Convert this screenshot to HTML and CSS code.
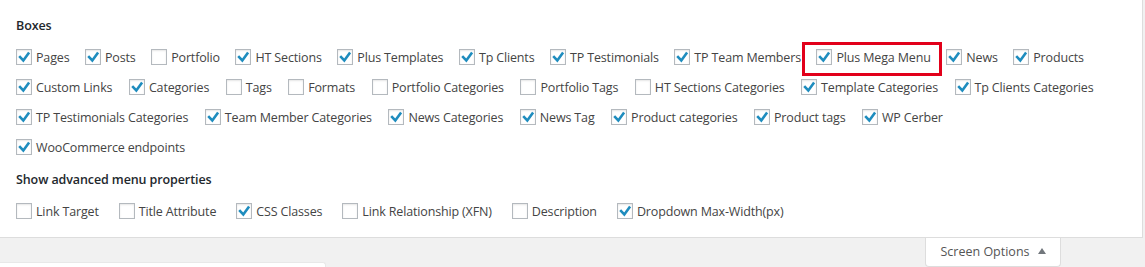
FILE: index.html
```html
<!DOCTYPE html>
<html lang="en">
<head>
<meta charset="utf-8">
<title>Screen Options</title>
<link rel="stylesheet" href="styles.css">
</head>
<body>
<svg class="defs" width="0" height="0" aria-hidden="true">
  <symbol id="tick" viewBox="0 0 16 16">
    <path d="M3.2 7.1 L7.3 11.4 L13.1 3.4" fill="none" stroke="#1e8cbe" stroke-width="2.6" stroke-linecap="butt" stroke-linejoin="miter"/>
  </symbol>
</svg>

<div class="panel">
  <div class="group-title">Boxes</div>
  <div class="row">
    <label class="opt"><span class="cb"><svg><use href="#tick"/></svg></span>Pages</label>
    <label class="opt"><span class="cb"><svg><use href="#tick"/></svg></span>Posts</label>
    <label class="opt"><span class="cb"></span>Portfolio</label>
    <label class="opt"><span class="cb"><svg><use href="#tick"/></svg></span>HT Sections</label>
    <label class="opt"><span class="cb"><svg><use href="#tick"/></svg></span>Plus Templates</label>
    <label class="opt"><span class="cb"><svg><use href="#tick"/></svg></span>Tp Clients</label>
    <label class="opt"><span class="cb"><svg><use href="#tick"/></svg></span>TP Testimonials</label>
    <label class="opt"><span class="cb"><svg><use href="#tick"/></svg></span>TP Team Members</label>
    <label class="opt highlight"><span class="cb"><svg><use href="#tick"/></svg></span>Plus Mega Menu</label>
    <label class="opt"><span class="cb"><svg><use href="#tick"/></svg></span>News</label>
    <label class="opt"><span class="cb"><svg><use href="#tick"/></svg></span>Products</label>
  </div>
  <div class="row wide">
    <label class="opt"><span class="cb"><svg><use href="#tick"/></svg></span>Custom Links</label>
    <label class="opt"><span class="cb"><svg><use href="#tick"/></svg></span>Categories</label>
    <label class="opt"><span class="cb"></span>Tags</label>
    <label class="opt"><span class="cb"></span>Formats</label>
    <label class="opt"><span class="cb"></span>Portfolio Categories</label>
    <label class="opt"><span class="cb"></span>Portfolio Tags</label>
    <label class="opt"><span class="cb"></span>HT Sections Categories</label>
    <label class="opt"><span class="cb"><svg><use href="#tick"/></svg></span>Template Categories</label>
    <label class="opt"><span class="cb"><svg><use href="#tick"/></svg></span>Tp Clients Categories</label>
  </div>
  <div class="row wide">
    <label class="opt"><span class="cb"><svg><use href="#tick"/></svg></span>TP Testimonials Categories</label>
    <label class="opt"><span class="cb"><svg><use href="#tick"/></svg></span>Team Member Categories</label>
    <label class="opt"><span class="cb"><svg><use href="#tick"/></svg></span>News Categories</label>
    <label class="opt"><span class="cb"><svg><use href="#tick"/></svg></span>News Tag</label>
    <label class="opt"><span class="cb"><svg><use href="#tick"/></svg></span>Product categories</label>
    <label class="opt"><span class="cb"><svg><use href="#tick"/></svg></span>Product tags</label>
    <label class="opt"><span class="cb"><svg><use href="#tick"/></svg></span>WP Cerber</label>
  </div>
  <div class="row">
    <label class="opt"><span class="cb"><svg><use href="#tick"/></svg></span>WooCommerce endpoints</label>
  </div>

  <div class="group-title second">Show advanced menu properties</div>
  <div class="row adv">
    <label class="opt"><span class="cb"></span>Link Target</label>
    <label class="opt"><span class="cb"></span>Title Attribute</label>
    <label class="opt"><span class="cb"><svg><use href="#tick"/></svg></span>CSS Classes</label>
    <label class="opt"><span class="cb"></span>Link Relationship (XFN)</label>
    <label class="opt"><span class="cb"></span>Description</label>
    <label class="opt"><span class="cb"><svg><use href="#tick"/></svg></span>Dropdown Max-Width(px)</label>
  </div>
</div>

<div class="below">
  <div class="next-box"></div>
  <button class="tab" type="button">Screen Options <span class="arrow"></span></button>
</div>
</body>
</html>
```

FILE: styles.css
```css
html, body {
  margin: 0;
  padding: 0;
}

body {
  background: #f1f1f1;
  font-family: "Open Sans", "Noto Sans", sans-serif;
  font-size: 12.5px;
  color: #444;
  width: 1145px;
  height: 267px;
  overflow: hidden;
}

.defs {
  position: absolute;
  width: 0;
  height: 0;
}

.panel {
  width: 1143px;
  box-sizing: border-box;
  background: #fff;
  border-right: 1px solid #ddd;
  border-bottom: 1px solid #ddd;
  padding: 16px 0 11px 16px;
}

.group-title {
  font-weight: 600;
  color: #23282d;
  line-height: 20px;
  height: 20px;
  margin-bottom: 6px;
  letter-spacing: -0.1px;
}

.group-title.second {
  margin-top: 8px;
  margin-bottom: 6px;
}

.row {
  display: flex;
  flex-wrap: nowrap;
  column-gap: 15.5px;
  height: 30px;
  align-items: center;
}

.row.wide {
  column-gap: 16.5px;
}

.row.adv {
  column-gap: 20px;
}

.opt {
  position: relative;
  display: flex;
  align-items: center;
  height: 30px;
  white-space: nowrap;
  letter-spacing: -0.15px;
  cursor: pointer;
}

.cb {
  display: inline-flex;
  width: 16px;
  height: 16px;
  box-sizing: border-box;
  border: 1px solid #b4b9be;
  background: #fff;
  box-shadow: inset 0 1px 2px rgba(0, 0, 0, 0.1);
  margin-right: 4px;
  flex: none;
  position: relative;
}

.cb svg {
  position: absolute;
  left: -1px;
  top: -1px;
  width: 16px;
  height: 16px;
}

.highlight::after {
  content: "";
  position: absolute;
  left: -14px;
  right: -11px;
  top: 0;
  bottom: -4px;
  border: 3px solid #e2001a;
  pointer-events: none;
}

.below {
  display: flex;
  justify-content: space-between;
  align-items: flex-start;
  width: 1143px;
  height: 29px;
}

.next-box {
  margin-top: 24px;
  width: 326px;
  height: 5px;
  background: #fff;
  border-top: 1px solid #e8e8e8;
  border-right: 1px solid #e8e8e8;
  border-radius: 0 3px 0 0;
  box-sizing: border-box;
}

.tab {
  margin-right: 82px;
  width: 136px;
  height: 29px;
  box-sizing: border-box;
  background: #fff;
  border: 1px solid #ddd;
  border-top: none;
  border-radius: 0 0 4px 4px;
  font-family: inherit;
  font-size: 12.5px;
  color: #555;
  padding: 0 0 1px 0;
  display: flex;
  align-items: center;
  justify-content: center;
  gap: 8px;
  cursor: pointer;
}

.arrow {
  width: 0;
  height: 0;
  border-left: 4.5px solid transparent;
  border-right: 4.5px solid transparent;
  border-bottom: 6px solid #72777c;
  position: relative;
  top: -1px;
}
```
